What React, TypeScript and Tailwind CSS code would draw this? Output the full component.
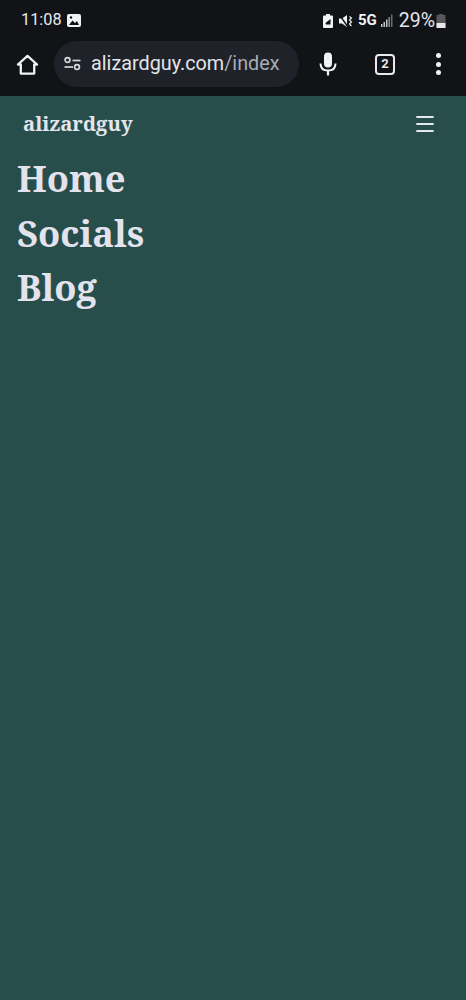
import { Menu } from 'lucide-react';

const serif = "font-['Noto_Serif','DejaVu_Serif',serif]";

function HomeIcon() {
  return (
    <svg width="23" height="23" viewBox="0 0 24 24" fill="none" stroke="#f1f2f4" strokeWidth="2.4" strokeLinejoin="round">
      <path d="M12 3 L22 12 H19 V21.5 H5 V12 H2 Z" />
    </svg>
  );
}

function TuneIcon() {
  return (
    <svg width="20" height="16" viewBox="0 0 20 16" fill="none" stroke="#d5d7dc" strokeWidth="1.7">
      <circle cx="4.5" cy="4" r="2.4" />
      <path d="M9.5 4.5 H17.5" />
      <path d="M1.5 11 H10" />
      <circle cx="14" cy="11" r="2.4" />
    </svg>
  );
}

function MicIcon() {
  return (
    <svg width="18" height="24" viewBox="0 0 18 24" fill="none">
      <rect x="5" y="0.5" width="8" height="15" rx="4" fill="#f1f2f4" />
      <path d="M1.5 11.5 C1.5 16 4.5 18.5 9 18.5 C13.5 18.5 16.5 16 16.5 11.5" stroke="#f1f2f4" strokeWidth="2" />
      <path d="M9 18 V23.5" stroke="#f1f2f4" strokeWidth="2.2" />
    </svg>
  );
}

function StatusIcons() {
  return (
    <div className="flex items-center">
      <svg width="10" height="14" viewBox="0 0 10 14" className="mr-[6px]">
        <path d="M3 0 H7 V1.5 H9 Q10 1.5 10 2.5 V13 Q10 14 9 14 H1 Q0 14 0 13 V2.5 Q0 1.5 1 1.5 H3 Z" fill="#f1f2f4" />
        <path d="M2.5 9 L7.5 5 V10.5 H3 Z" fill="#111317" />
      </svg>
      <svg width="14" height="14" viewBox="0 0 14 14" className="mr-[5px]" fill="#f1f2f4">
        <path d="M0 4.5 H3 L8 1 V13 L3 9.5 H0 Z" />
        <path d="M0.5 1 L9 13" stroke="#111317" strokeWidth="1.4" />
        <path d="M10.5 2.5 L12.5 4 L10.5 6 L12.5 8 L10.5 10 L12.5 12" stroke="#f1f2f4" strokeWidth="1.1" fill="none" />
      </svg>
      <span className="mr-[4px] font-['Roboto',sans-serif] text-[15px] font-bold text-[#f1f2f4]">5G</span>
      <svg width="12" height="13" viewBox="0 0 12 13" className="mr-[6px]" fill="#c4c6ca">
        <rect x="0" y="10" width="1.5" height="3" />
        <rect x="2.5" y="8" width="1.5" height="5" />
        <rect x="5" y="5.5" width="1.5" height="7.5" />
        <rect x="7.5" y="3" width="1.5" height="10" fill="#8b8d91" />
        <rect x="10" y="0.5" width="1.5" height="12.5" fill="#6b6d71" />
      </svg>
      <span className="font-['Roboto',sans-serif] text-[19.5px] leading-none text-[#e4e5e8]">29%</span>
      <svg width="10" height="14" viewBox="0 0 9 14" className="ml-[1px]">
        <path d="M2.5 0 H6.5 V1 H9 V14 H0 V1 H2.5 Z" fill="#55575b" />
        <path d="M0 9 H9 V14 H0 Z" fill="#e6e7ea" />
      </svg>
    </div>
  );
}

export default function App() {
  return (
    <div className="flex min-h-[1000px] flex-col bg-[#284e4c]">
      <div className="h-[96px] bg-[#111317]">
        <div className="flex h-[41px] items-center justify-between pl-[21px] pr-[20px]">
          <div className="flex items-center gap-[5px]">
            <span className="font-['Roboto',sans-serif] text-[16.3px] leading-none text-[#e8e9ec]">11:08</span>
            <svg width="14" height="13" viewBox="0 0 14 13">
              <rect width="14" height="13" rx="2" fill="#f1f2f4" />
              <path d="M2 11 L5.5 6.5 L8 9 L10 7 L12 11 Z" fill="#111317" />
              <circle cx="4" cy="3.5" r="1.2" fill="#111317" />
            </svg>
          </div>
          <StatusIcons />
        </div>
        <div className="flex h-[46px] items-center">
          <div className="flex w-[54px] justify-center">
            <HomeIcon />
          </div>
          <div className="flex h-[46px] w-[245px] items-center gap-[8px] rounded-full bg-[#1f2329] pl-[9px]">
            <TuneIcon />
            <span className="font-['Roboto',sans-serif] text-[19.8px] leading-none text-[#e4e5e8]">
              alizardguy.com<span className="text-[#a9acb2]">/index</span>
            </span>
          </div>
          <div className="flex w-[58px] justify-center">
            <MicIcon />
          </div>
          <div className="flex w-[56px] justify-center">
            <div className="flex h-[21px] w-[20px] items-center justify-center rounded-[4px] border-2 border-[#e8e9ec] font-['Roboto',sans-serif] text-[13px] font-bold text-[#e8e9ec]">
              2
            </div>
          </div>
          <div className="flex flex-1 flex-col items-center gap-[3.5px] pr-[2px]">
            <span className="h-[5px] w-[5px] rounded-full bg-[#f1f2f4]" />
            <span className="h-[5px] w-[5px] rounded-full bg-[#f1f2f4]" />
            <span className="h-[5px] w-[5px] rounded-full bg-[#f1f2f4]" />
          </div>
        </div>
      </div>

      <nav className="flex h-[55px] items-center justify-between pl-[23px] pr-[29px]">
        <span className={`${serif} text-[20.3px] font-bold leading-none text-[#e2e6ec]`}>alizardguy</span>
        <Menu size={24} strokeWidth={1.8} className="text-[#e4e8ec]" />
      </nav>
      <ul className={`${serif} pl-[17px] text-[36.3px] font-bold leading-[54.5px] text-[#e3e3ee]`}>
        <li>Home</li>
        <li>Socials</li>
        <li>Blog</li>
      </ul>
    </div>
  );
}
